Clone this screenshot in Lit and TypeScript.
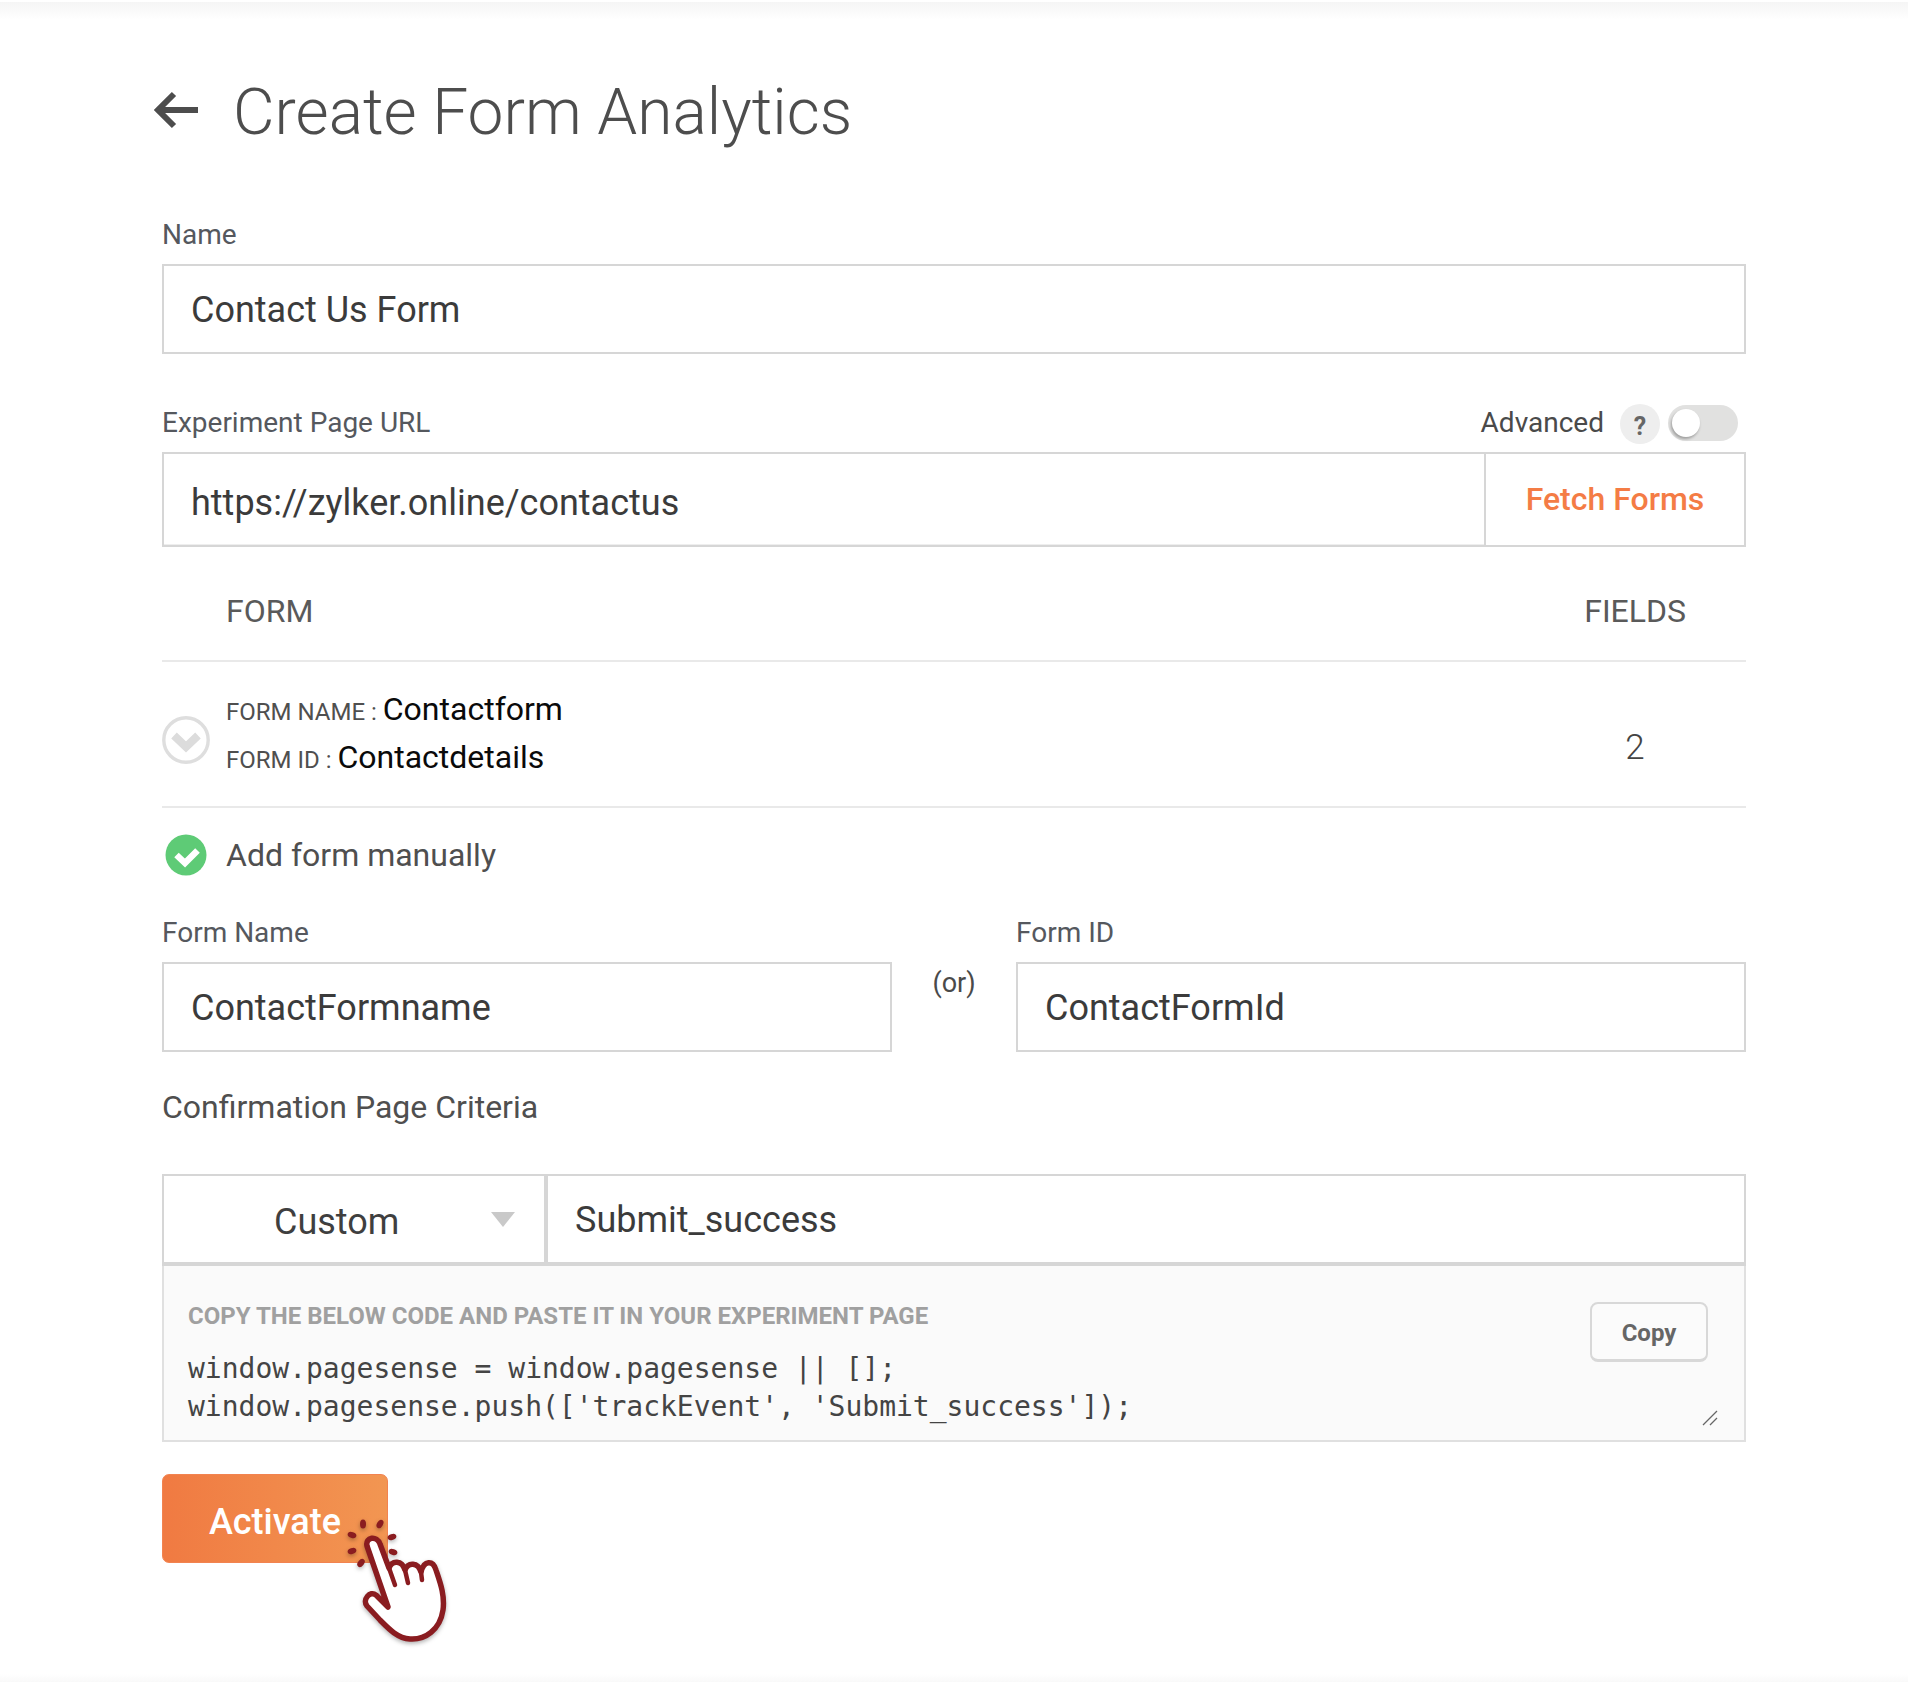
import { LitElement, html, css, svg } from "lit";
import { customElement } from "lit/decorators.js";

@customElement("app-root")
export class AppRoot extends LitElement {
  static styles = css`
    :host { display: block; position: relative; height: 1682px; background: #fff; font-family: Roboto, "Liberation Sans", sans-serif; color: #4a4a4a; overflow: hidden; }
    * { box-sizing: border-box; }
    .shade-top { height: 20px; background: linear-gradient(#fff 0, #fff 2px, #f5f5f5 2px, #fff 20px); }
    .shade-bottom { position: absolute; left: 0; right: 0; bottom: 0; height: 8px; background: linear-gradient(#fff, #f9f9f9); }
    .page { padding: 0 162px; }
    .head { display: flex; align-items: center; height: 78px; margin: 54px 0 0 -8px; }
    .arrow { width: 46px; height: 40px; margin: 0 33px 6px 0; flex: none; }
    h1 { margin: 0; font-size: 64px; font-weight: 300; color: #4d4d4d; line-height: 78px; }
    .label { font-size: 28px; line-height: 32px; color: #55585e; }
    .name-label { margin-top: 67px; }
    .box { border: 2px solid #d6d6d6; background: #fff; display: flex; align-items: center; font-size: 36px; color: #3b3b3b; padding: 2px 0 0 27px; }
    .b1 { height: 90px; margin-top: 13px; }
    .url-top { display: flex; justify-content: space-between; align-items: center; margin: 49px 0 10px; height: 39px; }
    .adv { display: flex; align-items: center; margin-bottom: 1px; }
    .adv span { font-size: 28px; color: #4a4a4a; margin-right: 16px; }
    .q { width: 40px; height: 40px; border-radius: 50%; background: #eee; display: flex; align-items: center; justify-content: center; font-weight: 700; font-size: 25px; color: #666; margin: 4px 8px 0 0; padding-top: 5px; }
    .toggle { width: 70px; height: 36px; border-radius: 18px; background: #e1e1e0; position: relative; margin: 2px 8px 0 0; }
    .toggle i { position: absolute; left: 4px; top: 4px; width: 28px; height: 28px; border-radius: 50%; background: #fff; box-shadow: -1px 2px 3px rgba(0,0,0,.3); }
    .urlrow { display: flex; height: 95px; border: 2px solid #d6d6d6; }
    .urlval { flex: 1; display: flex; align-items: center; padding: 8px 0 0 27px; font-size: 36px; color: #3b3b3b; border-bottom: 1px solid #eee; }
    .fetch { width: 260px; border-left: 2px solid #d6d6d6; display: flex; align-items: center; justify-content: center; color: #f47c45; font-size: 32px; font-weight: 500; padding-bottom: 2px; }
    .thead { display: flex; justify-content: space-between; align-items: center; height: 115px; padding: 15px 60px 0 64px; border-bottom: 2px solid #e9e9e9; font-size: 32px; color: #5a5a5a; }
    .row { display: flex; height: 146px; border-bottom: 2px solid #e9e9e9; align-items: center; }
    .row svg { width: 48px; height: 48px; margin-right: 16px; margin-top: 12px; flex: none; }
    .info { flex: 1; margin-top: -2px; }
    .info div { line-height: 48px; height: 48px; font-size: 24px; color: #4f4f4f; white-space: pre; }
    .info b { font-weight: 400; font-size: 32px; color: #0a0a0a; }
    .count { width: 96px; margin: 27px 63px 0 0; text-align: center; font-size: 35px; font-weight: 300; color: #444; }
    .manual { display: flex; align-items: center; height: 98px; font-size: 32px; color: #4f4f4f; padding: 0 0 5px 3px; }
    .manual svg { width: 42px; height: 42px; margin-right: 19px; }
    .two { display: flex; margin-top: 11px; }
    .col { width: 730px; }
    .b2 { height: 90px; margin-top: 13px; }
    .or { width: 124px; text-align: center; font-size: 27px; padding-top: 50px; color: #4a4a4a; }
    .crit { font-size: 32px; line-height: 38px; margin-top: 36px; color: #4f4f4f; }
    .sel { display: flex; height: 92px; margin-top: 48px; border: 2px solid #d6d6d6; border-bottom-width: 4px; }
    .drop { width: 384px; border-right: 4px solid #d6d6d6; display: flex; align-items: center; font-size: 36px; color: #3f3f3f; padding: 6px 0 0 110px; position: relative; }
    .tri { position: absolute; left: 327px; top: 36px; width: 0; height: 0; border: 12px solid transparent; border-top: 15px solid #c9c9c9; border-bottom: 0; }
    .sval { flex: 1; display: flex; align-items: center; padding: 2px 0 0 27px; font-size: 36px; color: #3b3b3b; }
    .code { position: relative; height: 176px; background: #fafafa; border: 2px solid #e0e0e0; border-top: 0; padding: 34px 24px 0; }
    .code h4 { margin: 0; font-size: 24px; line-height: 32px; font-weight: 700; color: #a0a0a0; }
    .code pre { margin: 18px 0 0; font-family: "DejaVu Sans Mono", "Liberation Mono", monospace; font-size: 28px; line-height: 38px; color: #444; }
    .copy { position: absolute; right: 36px; top: 36px; width: 118px; height: 60px; border: 2px solid #d8d8d8; border-bottom-width: 3px; border-radius: 8px; background: #fbfbfb; font-size: 24px; font-weight: 700; color: #666; display: flex; align-items: center; justify-content: center; padding-top: 3px; }
    .grip { position: absolute; right: 26px; bottom: 14px; width: 16px; height: 16px; }
    .activate { width: 226px; height: 89px; margin-top: 32px; border-radius: 7px; background: linear-gradient(90deg, #f07a42, #f29652); display: flex; align-items: center; justify-content: center; color: #fff; font-size: 36px; font-weight: 500; padding-top: 7px; border: 1px solid #f28350; }
    .hand { position: absolute; left: 320px; top: 1460px; width: 160px; height: 200px; filter: drop-shadow(0 2px 2px rgba(0,0,0,.3)) blur(.4px); }
  `;

  private sparks() {
    const pts: [number, number, number][] = [[32,75,20],[43,64,90],[60,64,-60],[72,77,-20],[73,92,20],[41,103,-50],[32,91,-20]];
    return pts.map(([x, y, r]) => svg`<ellipse cx=${x} cy=${y} rx="4.5" ry="3" transform="rotate(${r} ${x} ${y})" fill="#8a1c20"/>`);
  }

  render() {
    return html`
      <div class="shade-top"></div>
      <div class="page">
        <div class="head">
          <svg class="arrow" viewBox="0 0 46 40"><path d="M44 20H6M20 4L4 20l16 16" fill="none" stroke="#4d4d4d" stroke-width="6"/></svg>
          <h1>Create Form Analytics</h1>
        </div>
        <div class="label name-label">Name</div>
        <div class="box b1">Contact Us Form</div>
        <div class="url-top">
          <div class="label">Experiment Page URL</div>
          <div class="adv"><span>Advanced</span><div class="q">?</div><div class="toggle"><i></i></div></div>
        </div>
        <div class="urlrow">
          <div class="urlval">https://zylker.online/contactus</div>
          <div class="fetch">Fetch Forms</div>
        </div>
        <div class="thead"><span>FORM</span><span>FIELDS</span></div>
        <div class="row">
          <svg viewBox="0 0 48 48"><circle cx="24" cy="24" r="22.2" fill="none" stroke="#dedede" stroke-width="3.4"/><path d="M12 19.5L24 31 36 19.5" fill="none" stroke="#dcdcdc" stroke-width="8"/></svg>
          <div class="info">
            <div>FORM NAME : <b>Contactform</b></div>
            <div>FORM ID : <b>Contactdetails</b></div>
          </div>
          <div class="count">2</div>
        </div>
        <div class="manual">
          <svg viewBox="0 0 42 42"><circle cx="21" cy="21" r="20.5" fill="#5ecb76"/><path d="M11.5 21l8.5 8L32.5 16.5" fill="none" stroke="#fff" stroke-width="6.5"/></svg>
          Add form manually
        </div>
        <div class="two">
          <div class="col"><div class="label">Form Name</div><div class="box b2">ContactFormname</div></div>
          <div class="or">(or)</div>
          <div class="col"><div class="label">Form ID</div><div class="box b2">ContactFormId</div></div>
        </div>
        <div class="crit">Confirmation Page Criteria</div>
        <div class="sel">
          <div class="drop">Custom<span class="tri"></span></div>
          <div class="sval">Submit_success</div>
        </div>
        <div class="code">
          <h4>COPY THE BELOW CODE AND PASTE IT IN YOUR EXPERIMENT PAGE</h4>
          <pre>window.pagesense = window.pagesense || [];
window.pagesense.push(['trackEvent', 'Submit_success']);</pre>
          <div class="copy">Copy</div>
          <svg class="grip" viewBox="0 0 16 16"><path d="M1 15L15 1M8 15l7-7" stroke="#666" stroke-width="1.3"/></svg>
        </div>
        <div class="activate">Activate</div>
      </div>
      <svg class="hand" viewBox="0 0 160 200">
        ${this.sparks()}
        <path d="M47 86C45 77 57 75 60 84L69 108C72 100 82 100 85 110C88 102 98 102 101 112C104 100 113 100 116 110C120 122 125 135 123 150C120 170 105 180 90 179C77 178 68 168 60 160L47 146C42 140 50 130 56 135L68 147Z" fill="#fff" stroke="#8a1c20" stroke-width="5.5" stroke-linejoin="round"/>
        <path d="M69 108L75 125M85 110L88 123M101 112L102 120" fill="none" stroke="#8a1c20" stroke-width="4.5" stroke-linecap="round"/>
      </svg>
      <div class="shade-bottom"></div>
    `;
  }
}
